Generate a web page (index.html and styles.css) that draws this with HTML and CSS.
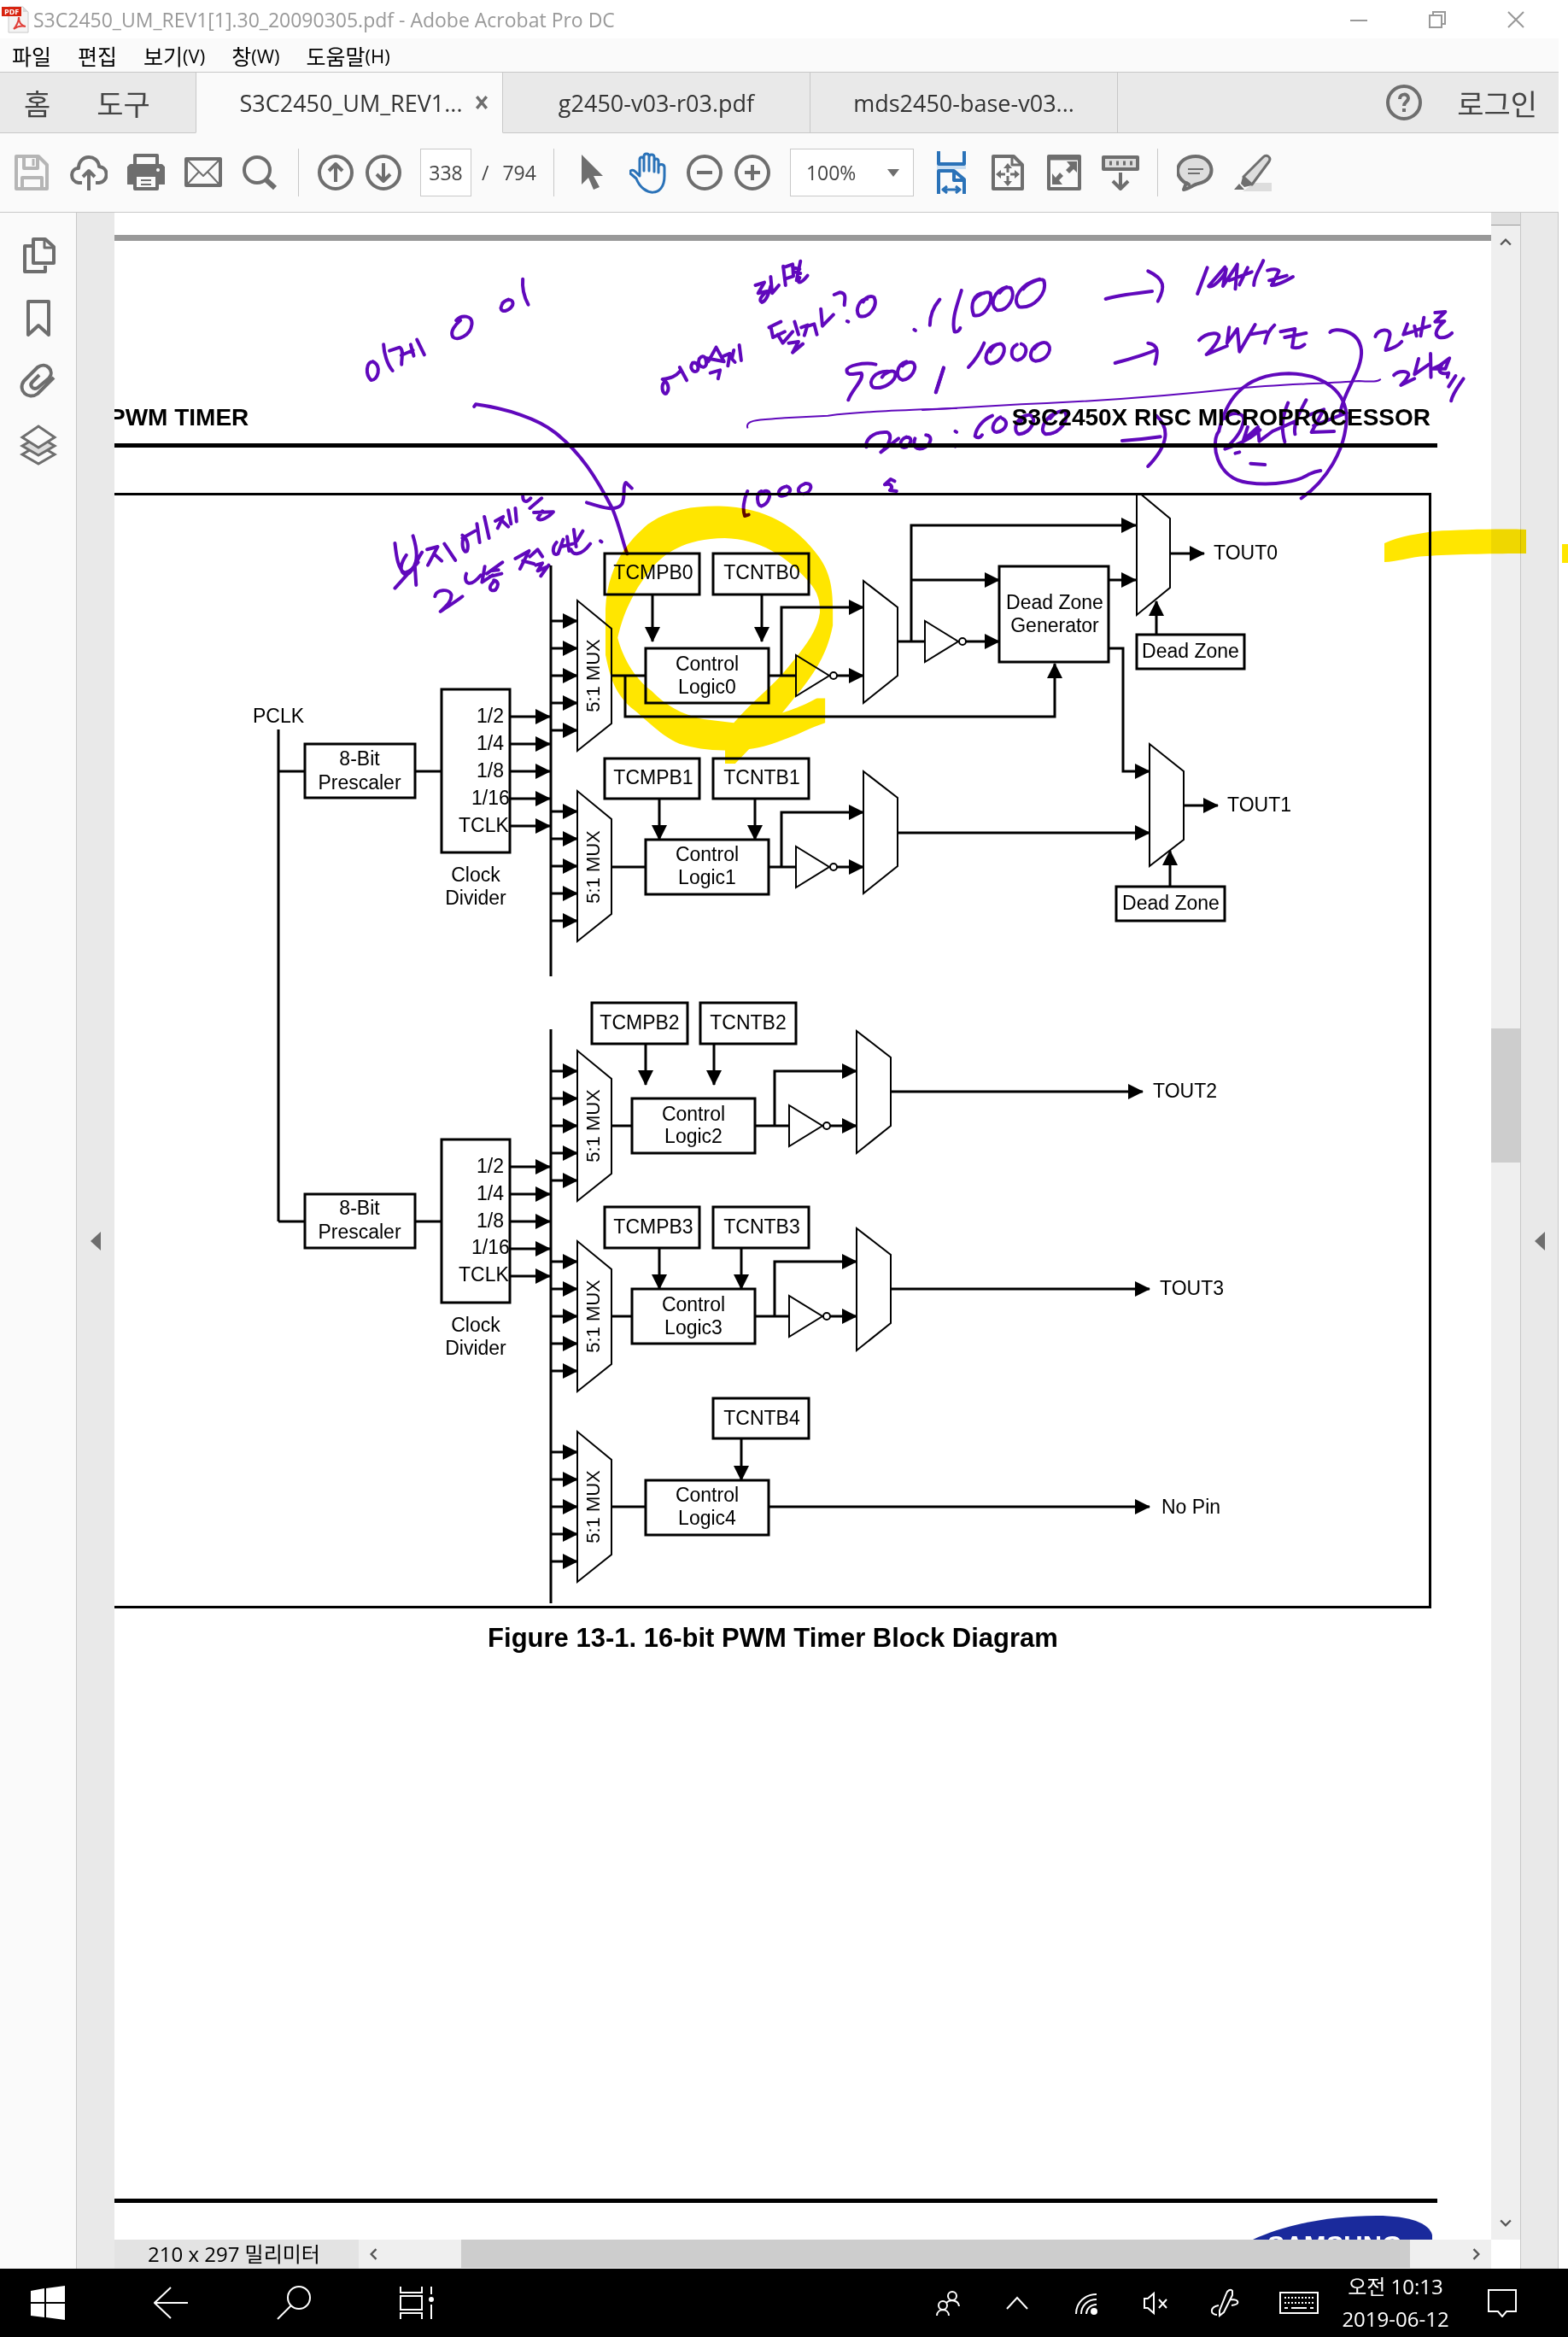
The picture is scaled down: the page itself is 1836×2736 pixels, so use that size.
FILE: index.html
```html
<!DOCTYPE html>
<html lang="ko">
<head>
<meta charset="utf-8">
<meta name="viewport" content="width=device-width, initial-scale=1">
<title>S3C2450_UM_REV1[1].30_20090305.pdf - Adobe Acrobat Pro DC</title>
<link rel="stylesheet" href="styles.css">
</head>
<body>
<div class="app">
  <header class="titlebar">
    <svg class="app-icon" viewBox="0 0 32 32" aria-hidden="true">
      <path d="M8 1h17l6 6v24H8z" fill="#f4f4f4" stroke="#c9c9c9"/>
      <path d="M25 1v6h6z" fill="#d8d8d8"/>
      <path d="M14 27c3-3 6-9 6-14 0 6 3 10 8 11-5-1-10 0-14 3z" fill="none" stroke="#e0403a" stroke-width="2"/>
      <rect x="0" y="1" width="23" height="11" fill="#d8230f"/>
      <text x="3" y="10" class="app-icon-text">PDF</text>
    </svg>
    <h1 class="title">S3C2450_UM_REV1[1].30_20090305.pdf - Adobe Acrobat Pro DC</h1>
    <div class="window-buttons">
      <button type="button" aria-label="최소화"><svg viewBox="0 0 20 20"><path d="M0 11H20"/></svg></button>
      <button type="button" aria-label="이전 크기로"><svg viewBox="0 0 20 20"><path d="M1 5H15V19H1zM5 5V1H19V15H15"/></svg></button>
      <button type="button" aria-label="닫기"><svg viewBox="0 0 20 20"><path d="M1 1L19 19M19 1L1 19"/></svg></button>
    </div>
  </header>

  <nav class="menubar" aria-label="메뉴">
    <button type="button">파일</button>
    <button type="button">편집</button>
    <button type="button">보기<small>(V)</small></button>
    <button type="button">창<small>(W)</small></button>
    <button type="button">도움말<small>(H)</small></button>
  </nav>

  <div class="tabs">
    <div class="tabs-main">
      <button type="button">홈</button>
      <button type="button">도구</button>
    </div>
    <div class="tab tab-active"><button type="button">S3C2450_UM_REV1...</button><button type="button" class="tab-close" aria-label="탭 닫기"><svg viewBox="0 0 14 14"><path d="M2 1L12 13M12 1L2 13"/></svg></button></div>
    <div class="tab"><button type="button">g2450-v03-r03.pdf</button></div>
    <div class="tab"><button type="button">mds2450-base-v03...</button></div>
    <div class="tabs-end">
      <button type="button" aria-label="도움말"><svg class="help" viewBox="0 0 44 44"><circle cx="22" cy="22" r="19"/><path d="M17 18c0-7 10-7 10-1 0 4-5 4-5 9"/><path d="M22 29v4"/></svg></button>
      <button type="button" class="login">로그인</button>
    </div>
  </div>

  <div class="toolbar">
    <div class="tools">
      <button type="button" aria-label="저장"><svg class="icon pale" viewBox="0 0 44 44"><path d="M4 3H30L40 13V41H4z"/><path d="M13 3V17H29V3M11 41V28H34V41" /><path d="M24 6V14" stroke-width="3"/></svg></button>
      <button type="button" aria-label="클라우드"><svg class="icon" viewBox="0 0 44 44"><path d="M14 34H10C-1 32 0 17 10 17 10 0 33 0 34 15 46 16 45 33 34 34H30"/><path d="M22 43V20M15 27L22 20L29 27"/></svg></button>
      <button type="button" aria-label="인쇄"><svg class="icon" viewBox="0 0 44 44"><path d="M9 14V2H35V14"/><path class="solid" d="M4 14H40L43 17V34H36V25H8V34H1V17z"/><path d="M9 25V41H35V25"/><path d="M16 31H28M16 36H28" stroke-width="2"/><circle cx="36" cy="19" r="1" stroke="#fff" stroke-width="2"/></svg></button>
      <button type="button" aria-label="메일"><svg class="icon" viewBox="0 0 44 44"><rect x="2" y="6" width="40" height="31"/><path d="M3 7L22 26L41 7M3 36L17 21M41 36L27 21" stroke-width="2"/></svg></button>
      <button type="button" aria-label="검색"><svg class="icon" viewBox="0 0 44 44"><circle cx="18" cy="19" r="15"/><path d="M28 30L39 40" stroke-width="6"/></svg></button>
    </div>
    <div class="tools tools-page">
      <button type="button" aria-label="이전 페이지"><svg class="icon" viewBox="0 0 44 44"><circle cx="22" cy="22" r="19"/><path d="M22 33V13M14 20L22 12L30 20"/></svg></button>
      <button type="button" aria-label="다음 페이지"><svg class="icon" viewBox="0 0 44 44"><circle cx="22" cy="22" r="19"/><path d="M22 11V31M14 24L22 32L30 24"/></svg></button>
      <input class="page-input" type="text" value="338" aria-label="페이지">
      <span class="page-total"><span>/</span><span>794</span></span>
    </div>
    <div class="tools tools-view">
      <button type="button" aria-label="선택"><svg class="icon" viewBox="0 0 44 44"><path class="solid" stroke="none" d="M10 1V36L18 28L24 42L31 39L24 26H35z"/></svg></button>
      <button type="button" aria-label="손"><svg class="icon blue" viewBox="0 0 44 48"><path d="M8 31L1 25C0 21 4 20 7 23L12 28V9C12 5 17 5 17 9V22V5C17 1 23 1 23 5V22V6C23 2 29 2 29 6V23V11C29 7 34 7 34 11V24V17C35 13 41 14 41 18V28C41 54 16 52 8 31Z" stroke-width="3"/></svg></button>
      <div class="zoom-steps">
        <button type="button" aria-label="축소"><svg class="icon" viewBox="0 0 44 44"><circle cx="22" cy="22" r="19"/><path d="M13 22H31"/></svg></button>
        <button type="button" aria-label="확대"><svg class="icon" viewBox="0 0 44 44"><circle cx="22" cy="22" r="19"/><path d="M13 22H31M22 13V31"/></svg></button>
      </div>
      <label class="zoom"><select aria-label="배율"><option>100%</option><option>125%</option><option>150%</option></select><svg viewBox="0 0 14 9"><path d="M0 0H14L7 9z"/></svg></label>
      <button type="button" aria-label="너비 맞춤"><svg class="icon blue" viewBox="0 0 44 50"><path d="M7 0V15H37V0M7 50V23H25L37 33V50M25 23V34H37"/><path d="M5 19H39" stroke="#c9def2" stroke-width="4"/><path d="M13 45H31M17 41L12 45L17 49M27 41L32 45L27 49" stroke-width="3"/></svg></button>
      <button type="button" aria-label="페이지 맞춤"><svg class="icon" viewBox="0 0 44 44"><path d="M5 3H29L39 13V41H5z"/><path d="M27 3V13H39M22 14V22M22 26V34M11 24H19M25 24H33" stroke-width="3"/><path class="solid" stroke="none" d="M22 11l5 6H17zM22 38l5-6H17zM8 24l6-5v10zM36 24l-6-5v10z"/></svg></button>
      <button type="button" aria-label="전체 화면"><svg class="icon" viewBox="0 0 44 44"><rect x="4" y="3" width="36" height="38"/><path d="M4 5H40" stroke-width="5"/><path class="solid" stroke="none" d="M37 9V22L33 18L28 23L24 19L29 14L25 9zM8 36V23L12 28L17 22L21 26L16 31L20 36z"/></svg></button>
      <button type="button" aria-label="도구 모음"><svg class="icon" viewBox="0 0 44 44"><rect x="2" y="4" width="40" height="14" fill="#ddd"/><path d="M9 11H36" stroke-width="5" stroke-dasharray="3 5"/><path d="M22 22V40M13 32L22 41L31 32"/></svg></button>
    </div>
    <div class="tools tools-note">
      <button type="button" aria-label="메모"><svg class="icon" viewBox="0 0 44 44"><path d="M14 36C-8 27 0 3 22 3S48 31 25 35C20 36 14 41 8 42L11 34z" fill="#ddd"/><path d="M13 18H31M13 23H27" stroke-width="2"/></svg></button>
      <button type="button" aria-label="강조"><svg class="icon" viewBox="0 0 44 44"><path d="M10 44L24 34H44V44z" fill="#ddd" stroke="none"/><path d="M11 27L34 4C38 0 44 4 41 9L21 36z" fill="#ddd" stroke-width="3"/><path class="solid" stroke="none" d="M10 27L21 37L12 39L8 35zM6 35L12 42H0z"/></svg></button>
    </div>
  </div>

  <main class="workspace">
    <nav class="rail" aria-label="탐색 창">
      <button type="button" aria-label="페이지 축소판"><svg class="icon" viewBox="0 0 44 44"><path d="M14 11H6V41H30V34" /><path d="M16 3H30L40 12V31H16z"/><path d="M29 3V13H40" stroke-width="3"/></svg></button>
      <button type="button" aria-label="책갈피"><svg class="icon" viewBox="0 0 44 44"><path d="M10 2H34V41L22 30L10 41z"/></svg></button>
      <button type="button" aria-label="첨부 파일"><svg class="icon" viewBox="0 0 44 44"><path d="M40 17L21 36C10 44-3 32 5 21L21 5C31-2 42 9 34 18L21 29C15 32 11 26 15 22L23 14"/></svg></button>
      <button type="button" aria-label="레이어"><svg class="icon thin" viewBox="0 0 44 48"><path d="M3 35L22 24L41 35L22 46z" fill="#fafafa"/><path d="M3 25L22 14L41 25L22 36z" fill="#ddd"/><path d="M3 15L22 2L41 15L22 27z" fill="#fafafa"/></svg></button>
    </nav>
    <button type="button" class="collapse" aria-label="탐색 창 펼치기"><svg viewBox="0 0 12 22"><path d="M12 0V22L0 11z"/></svg></button>

    <section class="viewer">
      <article class="page">
        <div class="page-break"></div>
        <header class="page-head"><span>PWM TIMER</span><span>S3C2450X RISC MICROPROCESSOR</span></header>
        <figure class="figure">
          <svg class="diagram" viewBox="134 580 1539 1300" role="img" aria-label="16-bit PWM Timer Block Diagram">
            <defs>
              <marker id="arrow" markerUnits="userSpaceOnUse" markerWidth="18" markerHeight="20" refX="17" refY="9" orient="auto"><path d="M0 0L18 9L0 18z"/></marker>
              <g id="mux5">
                <path class="thin-line" d="M676 703V879L716 847V736z"/>
                <path class="wire arrow" d="M645 727H676"/><path class="wire arrow" d="M645 759H676"/><path class="wire arrow" d="M645 791H676"/><path class="wire arrow" d="M645 823H676"/><path class="wire arrow" d="M645 855H676"/>
              </g>
              <path id="mux2" class="thin-line" d="M1011 680V823L1051 791V711z"/>
              <g id="inverter"><path class="thin-line" d="M0-24V24L39 0z"/><circle class="thin-line" cx="44" cy="0" r="4"/></g>
              <g id="clock">
                <path class="wire" d="M326 903H357M486 903H517"/>
                <rect class="wire" x="357" y="871" width="129" height="63"/>
                <rect class="wire" x="517" y="807" width="80" height="191"/>
                <path class="wire arrow" d="M597 839H644"/><path class="wire arrow" d="M597 871H644"/><path class="wire arrow" d="M597 903H644"/><path class="wire arrow" d="M597 935H644"/><path class="wire arrow" d="M597 967H644"/>
              </g>
            </defs>

            <path class="marker-pen" transform="translate(620 560) scale(.4082 .3827)" d="M545 85C680 88 770 150 830 240C860 285 870 330 870 400V450C850 560 800 620 725 717C780 700 800 685 825 673H848V748C800 765 780 780 740 795C700 812 665 824 630 828L590 873H561V832C510 832 470 825 430 812C370 785 330 730 290 700C240 650 230 600 218 540V400C225 240 310 170 340 140C400 95 470 84 545 85zM560 183C400 185 350 270 310 335C270 410 262 450 253 488C270 560 310 620 350 650C400 705 450 725 500 737L586 748C640 680 700 635 740 580C790 515 825 470 833 410C833 380 830 350 800 315C740 240 660 185 560 183z"/>

            <!-- clock sources -->
            <path class="wire" d="M326 854V1430"/>
            <use href="#clock"/>
            <use href="#clock" y="527"/>
            <path class="wire" d="M645 662V1143M645 1205V1877"/>
            <text x="296" y="846">PCLK</text>
            <text class="mid" x="421" y="896">8-Bit</text><text class="mid" x="421" y="924">Prescaler</text>
            <text x="558" y="846">1/2</text><text x="558" y="878">1/4</text><text x="558" y="910">1/8</text><text x="552" y="942">1/16</text><text x="537" y="974">TCLK</text>
            <text class="mid" x="557" y="1032">Clock</text><text class="mid" x="557" y="1059">Divider</text>
            <text class="mid" x="421" y="1422">8-Bit</text><text class="mid" x="421" y="1450">Prescaler</text>
            <text x="558" y="1373">1/2</text><text x="558" y="1405">1/4</text><text x="558" y="1437">1/8</text><text x="552" y="1468">1/16</text><text x="537" y="1500">TCLK</text>
            <text class="mid" x="557" y="1559">Clock</text><text class="mid" x="557" y="1586">Divider</text>

            <!-- 5:1 multiplexers -->
            <use href="#mux5"/><use href="#mux5" y="223"/><use href="#mux5" y="527"/><use href="#mux5" y="750"/><use href="#mux5" y="973"/>
            <text class="mid mux" transform="translate(702 791) rotate(-90)">5:1 MUX</text>
            <text class="mid mux" transform="translate(702 1015) rotate(-90)">5:1 MUX</text>
            <text class="mid mux" transform="translate(702 1318) rotate(-90)">5:1 MUX</text>
            <text class="mid mux" transform="translate(702 1541) rotate(-90)">5:1 MUX</text>
            <text class="mid mux" transform="translate(702 1764) rotate(-90)">5:1 MUX</text>

            <!-- channel 0 -->
            <rect class="wire" x="708" y="648" width="111" height="48"/><rect class="wire" x="835" y="648" width="112" height="48"/>
            <text class="mid" x="765" y="678">TCMPB0</text><text class="mid" x="892" y="678">TCNTB0</text>
            <path class="wire arrow" d="M764 696V751"/><path class="wire arrow" d="M892 696V751"/>
            <rect class="wire" x="756" y="759" width="144" height="64"/>
            <text class="mid" x="828" y="785">Control</text><text class="mid" x="828" y="812">Logic0</text>
            <path class="wire" d="M717 791H756M900 791H932"/>
            <path class="wire arrow" d="M732 791V839H1235V777"/>
            <path class="wire arrow" d="M915 791V711H1011"/><use href="#inverter" x="932" y="791"/><path class="wire arrow" d="M980 791H1011"/>
            <use href="#mux2"/>
            <path class="wire" d="M1051 751H1083"/><use href="#inverter" x="1083" y="751"/><path class="wire arrow" d="M1131 751H1170"/>
            <path class="wire arrow" d="M1067 751V615H1330"/><path class="wire arrow" d="M1067 679H1170"/>
            <rect class="wire" x="1170" y="663" width="128" height="112"/>
            <text class="mid" x="1235" y="713">Dead Zone</text><text class="mid" x="1235" y="740">Generator</text>
            <path class="wire arrow" d="M1298 679H1330"/><path class="wire arrow" d="M1298 759H1315V903H1346"/>
            <path class="thin-line" d="M1331 580V720L1370 688V607L1334 577"/>
            <path class="wire arrow" d="M1370 648H1410"/><text x="1421" y="655">TOUT0</text>
            <path class="wire arrow" d="M1354 743V704"/><rect class="wire" x="1331" y="743" width="126" height="40"/><text class="mid" x="1394" y="770">Dead Zone</text>

            <!-- channel 1 -->
            <rect class="wire" x="708" y="888" width="111" height="47"/><rect class="wire" x="835" y="888" width="112" height="47"/>
            <text class="mid" x="765" y="918">TCMPB1</text><text class="mid" x="892" y="918">TCNTB1</text>
            <path class="wire arrow" d="M772 935V983"/><path class="wire arrow" d="M884 935V983"/>
            <rect class="wire" x="756" y="983" width="144" height="64"/>
            <text class="mid" x="828" y="1008">Control</text><text class="mid" x="828" y="1035">Logic1</text>
            <path class="wire" d="M717 1015H756M900 1015H932"/>
            <path class="wire arrow" d="M915 1015V951H1011"/><use href="#inverter" x="932" y="1015"/><path class="wire arrow" d="M980 1015H1011"/>
            <use href="#mux2" y="223"/><path class="wire arrow" d="M1051 975H1346"/>
            <path class="thin-line" d="M1346 871V1014L1386 983V903z"/>
            <path class="wire arrow" d="M1386 943H1426"/><text x="1437" y="950">TOUT1</text>
            <path class="wire arrow" d="M1370 1038V996"/><rect class="wire" x="1307" y="1038" width="127" height="40"/><text class="mid" x="1371" y="1065">Dead Zone</text>

            <!-- channel 2 -->
            <rect class="wire" x="693" y="1174" width="112" height="48"/><rect class="wire" x="820" y="1174" width="112" height="48"/>
            <text class="mid" x="749" y="1205">TCMPB2</text><text class="mid" x="876" y="1205">TCNTB2</text>
            <path class="wire arrow" d="M756 1222V1270"/><path class="wire arrow" d="M836 1222V1270"/>
            <rect class="wire" x="740" y="1286" width="144" height="64"/>
            <text class="mid" x="812" y="1312">Control</text><text class="mid" x="812" y="1338">Logic2</text>
            <path class="wire" d="M717 1318H740M884 1318H924"/>
            <path class="wire arrow" d="M907 1318V1254H1003"/><use href="#inverter" x="924" y="1318"/><path class="wire arrow" d="M972 1318H1003"/>
            <use href="#mux2" x="-8" y="527"/><path class="wire arrow" d="M1043 1278H1338"/><text x="1350" y="1285">TOUT2</text>

            <!-- channel 3 -->
            <rect class="wire" x="708" y="1413" width="111" height="48"/><rect class="wire" x="835" y="1413" width="112" height="48"/>
            <text class="mid" x="765" y="1444">TCMPB3</text><text class="mid" x="892" y="1444">TCNTB3</text>
            <path class="wire arrow" d="M772 1461V1509"/><path class="wire arrow" d="M868 1461V1509"/>
            <rect class="wire" x="740" y="1509" width="144" height="64"/>
            <text class="mid" x="812" y="1535">Control</text><text class="mid" x="812" y="1562">Logic3</text>
            <path class="wire" d="M717 1541H740M884 1541H924"/>
            <path class="wire arrow" d="M907 1541V1477H1003"/><use href="#inverter" x="924" y="1541"/><path class="wire arrow" d="M972 1541H1003"/>
            <use href="#mux2" x="-8" y="758"/><path class="wire arrow" d="M1043 1509H1346"/><text x="1358" y="1516">TOUT3</text>

            <!-- channel 4 -->
            <rect class="wire" x="835" y="1637" width="112" height="47"/><text class="mid" x="892" y="1668">TCNTB4</text>
            <path class="wire arrow" d="M868 1684V1733"/>
            <rect class="wire" x="756" y="1733" width="144" height="64"/>
            <text class="mid" x="828" y="1758">Control</text><text class="mid" x="828" y="1785">Logic4</text>
            <path class="wire" d="M717 1764H756"/><path class="wire arrow" d="M900 1764H1346"/><text x="1360" y="1772">No Pin</text>
          </svg>
          <figcaption>Figure 13-1. 16-bit PWM Timer Block Diagram</figcaption>
        </figure>
        <footer class="page-foot">
          <svg class="logo" viewBox="0 0 210 80"><path d="M0 28C35 12 85 0 145 0C190 0 214 12 210 30C204 54 150 72 80 74C20 74 -30 46 0 28z"/><text x="96" y="46">SAMSUNG</text></svg>
        </footer>
      </article>
      <div class="hbar">
        <span class="size">210 x 297 밀리미터</span>
        <button type="button" aria-label="왼쪽"><svg viewBox="0 0 12 12"><path d="M9 1L4 6L9 11"/></svg></button>
        <div class="htrack"><div class="hthumb"></div></div>
        <button type="button" aria-label="오른쪽"><svg viewBox="0 0 12 12"><path d="M3 1L8 6L3 11"/></svg></button>
      </div>
    </section>

    <div class="vbar">
      <div class="split"></div>
      <button type="button" aria-label="위로"><svg viewBox="0 0 12 12"><path d="M1 9L6 4L11 9"/></svg></button>
      <div class="vtrack"><div class="vthumb"></div></div>
      <button type="button" aria-label="아래로"><svg viewBox="0 0 12 12"><path d="M1 3L6 8L11 3"/></svg></button>
    </div>
    <button type="button" class="collapse collapse-right" aria-label="도구 창 펼치기"><svg viewBox="0 0 12 22"><path d="M12 0V22L0 11z"/></svg></button>

    <!-- pen annotations float above the document and its scroll bar -->
    <svg class="ink" viewBox="0 249 1836 2407" preserveAspectRatio="xMinYMin meet" aria-hidden="true">
      <path class="marker-pen" d="M1621 636C1640 627 1660 625 1680 622C1710 620 1760 619 1787 620V648C1750 648 1700 649 1670 651C1650 652 1635 658 1621 658z"/>
      <path class="marker-pen" d="M1829 637H1836V659H1829z"/>
      <g class="pen" transform="translate(400 260) scale(.4592 .3333)">
        <path d="M80 490C62 492 60 535 75 555C92 558 104 505 80 490M107 430C108 460 116 500 130 522M122 452L148 440C160 450 152 480 153 500M152 468L182 450M176 430L184 470M192 413L211 466"/>
        <path d="M292 345C305 325 335 325 332 360C328 400 295 418 284 404C275 385 290 360 303 345M410 285C425 265 440 272 436 292C428 312 408 320 406 302C408 285 418 275 425 272M462 200C460 230 465 262 476 290"/>
        <path d="M338 648L342 640C420 655 500 690 545 740C610 810 650 900 690 1005C710 1070 718 1130 728 1165M625 985C660 1000 700 1020 715 990C725 960 715 925 725 915L740 935"/>
        <path d="M826 560C812 570 818 608 828 602C838 585 832 560 818 552C840 548 852 542 862 525M862 510L880 556M895 495C885 515 900 535 908 520C912 505 905 490 895 495M912 480C905 505 925 520 930 500C930 480 925 460 912 480M955 440L935 490M930 478L975 490L955 440M940 530L965 520L960 550M975 470L990 462L985 505M1000 450L995 480L1003 492M1014 432L1019 486"/>
        <path d="M1055 222L1078 212L1062 250L1085 243C1070 260 1062 275 1072 282C1080 278 1088 260 1094 225M1094 192L1098 250L1115 222M1126 155L1132 222M1126 160L1150 148L1152 190L1130 200M1170 137L1160 205M1150 160L1168 165M1155 175L1170 180M1168 195C1160 215 1168 222 1188 188"/>
        <path d="M1090 370L1120 350M1095 372L1100 405L1130 385M1112 395L1125 425L1150 385M1155 350L1165 395M1140 425L1165 420L1150 458L1176 428M1172 370L1188 362L1180 398M1190 365L1205 358L1212 395M1222 305L1226 365L1254 325M1256 255L1270 247C1290 248 1282 275 1282 292M1289 348L1292 350M1340 270C1320 270 1308 310 1320 330C1345 340 1368 295 1358 265C1350 255 1335 265 1330 280M1460 378L1463 381M1525 272C1508 300 1500 330 1500 362"/>
        <path d="M1362 500C1330 490 1290 505 1288 520C1288 545 1310 530 1325 530C1335 550 1300 590 1292 625M1398 525C1360 520 1340 560 1355 580C1380 590 1415 560 1412 530C1405 515 1385 530 1378 545M1440 490C1415 500 1410 545 1430 555C1455 550 1468 510 1458 495C1450 488 1435 495 1430 505M1535 512L1515 598"/>
        <path class="fine" d="M1035 722C1028 690 1080 695 1130 688L1240 680C1330 665 1440 660 1568 654"/>
        <path d="M1338 790C1335 770 1350 735 1390 738C1405 745 1400 780 1375 808L1420 760M1440 755C1420 765 1420 800 1440 790C1455 775 1455 755 1440 755M1462 760C1455 790 1465 800 1482 795C1505 780 1508 750 1490 748"/>
        <path d="M1035 945C1025 975 1022 1010 1028 1032L1038 1028M1070 945C1055 955 1060 995 1070 998C1090 990 1098 950 1085 945C1078 943 1070 950 1068 955M1130 930C1110 940 1110 965 1125 962C1145 955 1150 935 1135 928M1180 920C1160 930 1160 955 1178 955C1198 950 1205 915 1182 918M1410 910L1400 903L1385 922C1400 915 1408 930 1398 942L1415 945"/>
        <path d="M136 1128C140 1180 145 1220 160 1232C190 1225 200 1180 182 1102M165 1170C150 1200 145 1230 165 1240C185 1225 190 1190 205 1160M136 1286L195 1195M187 1210L190 1275M218 1150L245 1140L220 1205M235 1165L255 1190M262 1130L290 1188M310 1110C305 1140 312 1165 320 1155C325 1135 320 1110 308 1100M308 1110L340 1085M345 1060L352 1125M364 1035L376 1110M392 1050L412 1035L398 1075M410 1050L425 1070M425 1012L432 1060M443 1005L446 1052M462 962C462 980 470 990 482 970M480 1005L510 970M490 1020L540 1018C530 1035 505 1055 500 1040L512 1015"/>
        <path d="M238 1315C240 1290 275 1285 280 1310C280 1335 265 1350 252 1368C270 1350 290 1335 308 1315M318 1235C310 1265 325 1290 355 1240M365 1210L358 1265L385 1240M370 1235L410 1195M380 1225L400 1222M378 1245L408 1235M390 1260C370 1285 380 1300 392 1292C402 1275 400 1262 388 1258M443 1182L478 1155L455 1218M462 1190L490 1200M480 1175L500 1150L512 1175M495 1205L512 1198L500 1225L525 1210L508 1243L528 1205M548 1125C535 1145 538 1175 552 1165L565 1115M575 1105L580 1155M560 1140L590 1130M592 1080L598 1140M615 1085L600 1120M585 1150C590 1170 610 1175 634 1130M660 1120L663 1123"/>
      </g>
      <g class="pen" transform="translate(1080 260) scale(.4822 .3333)">
        <path d="M95 240C85 290 70 340 78 385C85 388 90 380 92 372M150 250C125 250 115 290 125 328C150 335 172 285 165 250C155 240 135 255 125 275M205 228C175 240 160 290 182 310C210 312 228 260 215 232C205 225 195 235 188 248M285 200C240 215 215 270 235 298C270 305 305 250 295 205C285 195 255 215 245 235"/>
        <path d="M445 270C480 255 520 250 558 243M548 172C590 200 590 230 572 278M692 160L668 252M735 158L695 225C705 235 735 190 738 165L730 225L765 148L760 235M790 160L770 220M745 205L800 175M828 135C820 165 805 190 805 222M838 170C850 165 862 165 866 172L848 222C865 222 885 205 900 192M842 205L885 188"/>
        <path d="M150 425C140 460 125 490 112 510M180 430C155 440 145 490 165 497C195 495 208 440 192 428C180 425 170 440 165 455M230 430C210 445 215 485 232 485C255 475 258 435 240 428M290 425C260 435 255 485 275 488C305 485 320 440 300 424C290 420 278 430 272 445M52 512L33 598"/>
        <path d="M468 495C500 482 540 468 568 448M548 425C575 430 572 460 565 498M672 415C690 385 725 385 720 405C715 430 700 450 690 465L740 435M745 370L740 425L765 375L770 455L808 360M795 395L835 385M855 362C835 390 835 410 832 425M870 385L905 375L898 440C910 445 920 440 928 430M880 405L932 390"/>
        <path d="M990 387C1000 370 1060 375 1066 450C1070 520 1020 600 1015 670M1100 402C1105 375 1140 370 1135 400C1132 425 1125 440 1125 450C1140 445 1155 435 1164 420M1178 358L1168 395L1190 385M1195 365L1200 400M1218 335L1210 400M1198 380L1232 365M1245 318L1270 315L1245 350L1268 348C1250 370 1240 395 1255 405C1265 408 1275 405 1286 390"/>
        <path d="M1145 538C1155 520 1185 520 1180 540C1175 555 1168 565 1162 573L1195 550M1205 480L1195 535L1230 500M1234 462L1235 545M1255 505L1280 478L1270 515L1240 515L1262 500C1245 530 1265 535 1278 530L1275 545M1295 540L1278 578M1314 550C1300 580 1288 600 1284 628"/>
        <path class="fine" d="M0 660L240 640C420 630 600 610 760 585C880 568 980 568 1060 558C1090 560 1105 562 1112 553"/>
        <path d="M80 735L83 738M78 785L80 788M170 680C145 695 130 725 128 752C135 762 142 755 145 748M190 685C170 700 165 735 180 738C205 732 210 700 195 690M250 680C225 690 220 740 235 745C265 740 280 690 262 678C250 675 240 690 238 705M335 665C300 675 280 735 300 745C335 745 360 690 345 665C335 660 320 670 310 690"/>
        <path d="M485 768C520 765 550 760 578 754M568 680C600 720 600 780 548 858"/>
        <path d="M735 690C750 665 785 665 780 700C775 740 755 770 735 797C760 785 795 765 820 730M790 720L780 765L815 720L818 770L850 735M888 635C875 680 870 720 880 772M850 735L905 700M932 625C915 670 900 710 905 745M935 680L975 658L945 738L1000 735M950 715L1030 670M760 812L770 808M797 848L832 852"/>
        <path d="M720 735C735 640 770 535 890 532C980 535 1030 600 1030 690C1028 800 980 910 920 970M720 735C700 770 710 900 790 915C860 930 920 905 940 885C950 878 958 875 967 873"/>
      </g>
    </svg>
  </main>

  <footer class="taskbar">
    <div class="task-left">
      <button type="button" aria-label="시작"><svg class="win" viewBox="0 0 40 40"><path d="M0 6L16 3V19H0zM18 3L40 0V19H18zM0 21H16V37L0 35zM18 21H40V40L18 37z"/></svg></button>
      <button type="button" aria-label="뒤로"><svg viewBox="0 0 40 40"><path d="M40 20H1M20 2L1 20L20 38"/></svg></button>
      <button type="button" aria-label="찾기"><svg viewBox="0 0 40 40"><circle cx="26" cy="14" r="13"/><path d="M17 23L1 39"/></svg></button>
      <button type="button" aria-label="작업 보기"><svg viewBox="0 0 40 40"><path d="M1 1V8H26V1M1 12H26V28H1zM1 39V32H26V39M37 1V10M37 22V39"/><circle cx="37" cy="16" r="2" fill="#fff"/></svg></button>
    </div>
    <div class="tray">
      <div class="tray-icons">
        <button type="button" aria-label="사람"><svg viewBox="0 0 28 30"><circle cx="19" cy="7" r="5"/><path d="M12 15C16 11 26 11 27 19"/><circle cx="8" cy="18" r="5"/><path d="M1 30C1 21 15 21 15 30"/></svg></button>
        <button type="button" aria-label="숨겨진 아이콘 표시"><svg viewBox="0 0 28 30"><path d="M2 22L14 9L26 22"/></svg></button>
        <button type="button" aria-label="네트워크"><svg viewBox="0 0 28 30"><path d="M2 28C2 14 13 5 26 5M8 28C8 18 16 11 26 11M14 28C14 22 19 17 26 17"/><circle cx="23" cy="25" r="3" fill="#fff"/></svg></button>
        <button type="button" aria-label="소리 끔"><svg viewBox="0 0 28 30"><path d="M1 10H5L12 4V27L5 21H1zM18 11L27 21M27 11L18 21"/></svg></button>
        <button type="button" aria-label="펜"><svg class="wide" viewBox="0 0 34 34"><path d="M26 3C24 0 20 3 19 6L11 26V32L16 28L26 8zM10 20C-1 22 0 31 8 31M24 13C35 13 35 19 25 20"/></svg></button>
        <button type="button" aria-label="터치 키보드"><svg class="keys" viewBox="0 0 46 28"><rect x="1" y="2" width="44" height="24"/><path d="M6 8H40M6 14H40" stroke-dasharray="2 2"/><path d="M6 20H10M14 20H32M36 20H40"/></svg></button>
      </div>
      <time class="clock" datetime="2019-06-12T10:13"><span>오전 10:13</span><span>2019-06-12</span></time>
      <button type="button" aria-label="알림 센터"><svg class="wide" viewBox="0 0 34 34"><path d="M1 2H33V27H22L17 33L12 27H1z"/></svg></button>
    </div>
  </footer>
</div>
</body>
</html>
```
FILE: styles.css
```css
* { box-sizing: border-box; }

body {
  margin: 0;
  background: #fff;
  color: #000;
  font-family: "Open Sans", "Noto Sans CJK KR", sans-serif;
}

button {
  margin: 0;
  padding: 0;
  border: 0;
  background: none;
  color: inherit;
  font: inherit;
  display: flex;
  align-items: center;
  justify-content: center;
}

svg { display: block; flex: none; }

.app {
  display: flex;
  flex-direction: column;
  min-height: 100vh;
}

.titlebar, .menubar, .tabs, .toolbar { margin-right: 11px; }

/* title bar */
.titlebar {
  display: flex;
  align-items: center;
  height: 45px;
  padding: 0 40px 0 2px;
}
.app-icon { width: 32px; height: 32px; }
.app-icon-text { font-size: 9px; font-weight: 700; fill: #fff; }
.title {
  flex: 1;
  margin: 0 0 0 5px;
  color: #999;
  font-size: 23px;
  font-weight: 400;
  white-space: nowrap;
}
.window-buttons { display: flex; gap: 72px; }
.window-buttons svg { width: 20px; height: 20px; fill: none; stroke: #999; stroke-width: 2; }

/* menu bar */
.menubar {
  display: flex;
  align-items: center;
  gap: 31px;
  height: 39px;
  padding-left: 14px;
  background: #fafafa;
  font-size: 25px;
}
.menubar small { font-size: 22px; }

/* document tabs */
.tabs {
  display: flex;
  height: 72px;
  border-top: 1px solid #c8c8c8;
  background: #e9e9e9;
  font-size: 27px;
  color: #333;
}
.tabs-main {
  display: flex;
  gap: 54px;
  width: 229px;
  padding-left: 28px;
  border-bottom: 1px solid #c8c8c8;
  font-size: 34px;
  color: #444;
}
.tab {
  display: flex;
  justify-content: center;
  align-items: center;
  gap: 14px;
  width: 360px;
  border-right: 1px solid #c8c8c8;
  border-bottom: 1px solid #c8c8c8;
}
.tab-active {
  padding-left: 34px;
  border-left: 1px solid #c8c8c8;
  border-bottom-color: #fafafa;
  background: #fafafa;
}
.tab-close svg { width: 16px; height: 16px; fill: none; stroke: #6e6e6e; stroke-width: 3; }
.tabs-end {
  flex: 1;
  display: flex;
  justify-content: flex-end;
  gap: 40px;
  padding-right: 25px;
  border-bottom: 1px solid #c8c8c8;
}
.help { width: 44px; height: 44px; fill: none; stroke: #6e6e6e; stroke-width: 4; }
.login { font-size: 34px; color: #444; }

/* toolbar */
.toolbar {
  display: flex;
  align-items: center;
  height: 93px;
  padding-left: 15px;
  border-bottom: 1px solid #c8c8c8;
  background: #fafafa;
}
.tools {
  display: flex;
  align-items: center;
  gap: 23px;
  height: 56px;
}
.tools-page { gap: 12px; margin-left: 22px; padding-left: 21px; border-left: 1px solid #c8c8c8; }
.tools-view { gap: 22px; margin-left: 20px; padding-left: 22px; border-left: 1px solid #c8c8c8; }
.tools-note { margin-left: 21px; padding-left: 22px; border-left: 1px solid #c8c8c8; }
.zoom-steps { display: flex; gap: 12px; }
.icon {
  width: 44px;
  height: 44px;
  fill: none;
  stroke: #6e6e6e;
  stroke-width: 4;
  stroke-linejoin: round;
}
.icon .solid { fill: #6e6e6e; }
.pale { stroke: #b5b5b5; }
.blue { height: 50px; stroke: #2a72b8; }
.thin { height: 48px; stroke-width: 3; stroke-linejoin: miter; }
.page-input {
  width: 60px;
  height: 56px;
  margin-left: 9px;
  padding: 0;
  border: 1px solid #c8c8c8;
  background: #fff;
  color: #444;
  font: inherit;
  font-size: 23px;
  text-align: center;
}
.page-total { display: flex; gap: 16px; color: #444; font-size: 23px; }
.zoom { display: flex; align-items: center; width: 145px; height: 56px; }
.zoom select {
  appearance: none;
  flex: 1;
  height: 56px;
  padding: 0 18px;
  border: 1px solid #c8c8c8;
  border-radius: 0;
  background: #fff;
  color: #444;
  font: inherit;
  font-size: 23px;
}
.zoom svg { width: 14px; height: 9px; margin: 0 17px 0 -31px; fill: #6e6e6e; }

/* workspace */
.workspace {
  position: relative;
  flex: 1;
  display: grid;
  grid-template-columns: 90px 44px 1fr 34px 45px;
  padding-right: 11px;
}
.rail {
  display: flex;
  flex-direction: column;
  align-items: center;
  gap: 26px;
  padding-top: 26px;
  border-right: 1px solid #c8c8c8;
  background: #fafafa;
}
.rail button { height: 48px; }
.collapse { background: #e9e9e9; }
.collapse svg { width: 12px; height: 22px; fill: #6e6e6e; }
.collapse-right { border: solid #c8c8c8; border-width: 0 1px; }

.viewer {
  display: flex;
  flex-direction: column;
  min-width: 0;
}
.page {
  flex: 1 1 0;
  display: flex;
  flex-direction: column;
  overflow: hidden;
  font-family: "Liberation Sans", sans-serif;
}
.page-break { height: 7px; margin-top: 26px; background: #999; }
.page-head {
  display: flex;
  justify-content: space-between;
  margin: 190px 63px 0 -6px;
  padding: 0 8px 14px 0;
  border-bottom: 5px solid #000;
  font-size: 28px;
  line-height: 33px;
  font-weight: 700;
  white-space: nowrap;
}
.figure { margin: 53px 70px 0 0; }
.diagram {
  width: 100%;
  border: solid #000;
  border-width: 3px 3px 3px 0;
}
.diagram text { font-size: 23px; }
.diagram .mid { text-anchor: middle; }
.diagram .mux { font-size: 22px; }
.wire { fill: none; stroke: #000; stroke-width: 3; }
.arrow { marker-end: url(#arrow); }
.thin-line { fill: none; stroke: #000; stroke-width: 2; }
.marker-pen { fill: #ffe600; stroke: none; }
.figure figcaption {
  padding-top: 17px;
  font-size: 31px;
  line-height: 36px;
  font-weight: 700;
  text-align: center;
}
.page-foot {
  height: 48px;
  margin: auto 63px 0 0;
  padding: 15px 6px 0 0;
  border-top: 5px solid #000;
  overflow: hidden;
}
.logo { width: 210px; height: 80px; margin-left: auto; fill: #1a2a9c; }
.logo text { font-size: 31px; font-weight: 700; text-anchor: middle; fill: #fff; }

/* scroll bars */
.hbar { display: flex; height: 34px; background: #efefef; }
.hbar svg, .vbar svg { width: 14px; height: 14px; fill: none; stroke: #555; stroke-width: 2; }
.hbar button { width: 34px; }
.size {
  width: 286px;
  padding-left: 39px;
  background: #e3e3e3;
  font-size: 24px;
  line-height: 34px;
}
.htrack { flex: 1; padding: 0 61px 1px 86px; }
.hthumb { height: 100%; background: #cdcdcd; }
.vbar {
  display: flex;
  flex-direction: column;
  margin-bottom: 34px;
  background: #efefef;
}
.split { height: 15px; background: #e0e0e0; border-bottom: 1px solid #999; }
.vbar button { height: 38px; }
.vtrack {
  flex: 1;
  display: grid;
  grid-template-rows: 902fr 157fr 1223fr;
}
.vthumb { grid-row: 2; background: #cdcdcd; }

/* pen annotations */
.ink {
  position: absolute;
  top: 0;
  left: 0;
  width: 100%;
  height: auto;
  pointer-events: none;
  mix-blend-mode: multiply;
}
.pen path {
  fill: none;
  stroke: #6008bc;
  stroke-width: 4;
  stroke-linecap: round;
  stroke-linejoin: round;
  vector-effect: non-scaling-stroke;
}
.pen .fine { stroke-width: 2; }

/* taskbar */
.taskbar {
  display: flex;
  justify-content: space-between;
  align-items: center;
  height: 80px;
  padding: 0 60px 0 36px;
  background: #000;
  color: #fff;
}
.taskbar svg { width: 28px; height: 30px; fill: none; stroke: #fff; stroke-width: 2; }
.task-left { display: flex; gap: 104px; }
.task-left svg { width: 40px; height: 40px; }
.taskbar .win { fill: #fff; stroke: none; }
.tray, .tray-icons { display: flex; align-items: center; }
.tray { gap: 25px; }
.tray-icons { gap: 47px; }
.tray-icons button { min-width: 34px; }
.taskbar .wide { width: 34px; height: 34px; }
.taskbar .keys { width: 46px; height: 28px; }
.clock {
  display: flex;
  flex-direction: column;
  align-items: center;
  width: 130px;
  font-size: 24px;
  line-height: 38px;
}
.clock + button { padding-left: 18px; }
```
